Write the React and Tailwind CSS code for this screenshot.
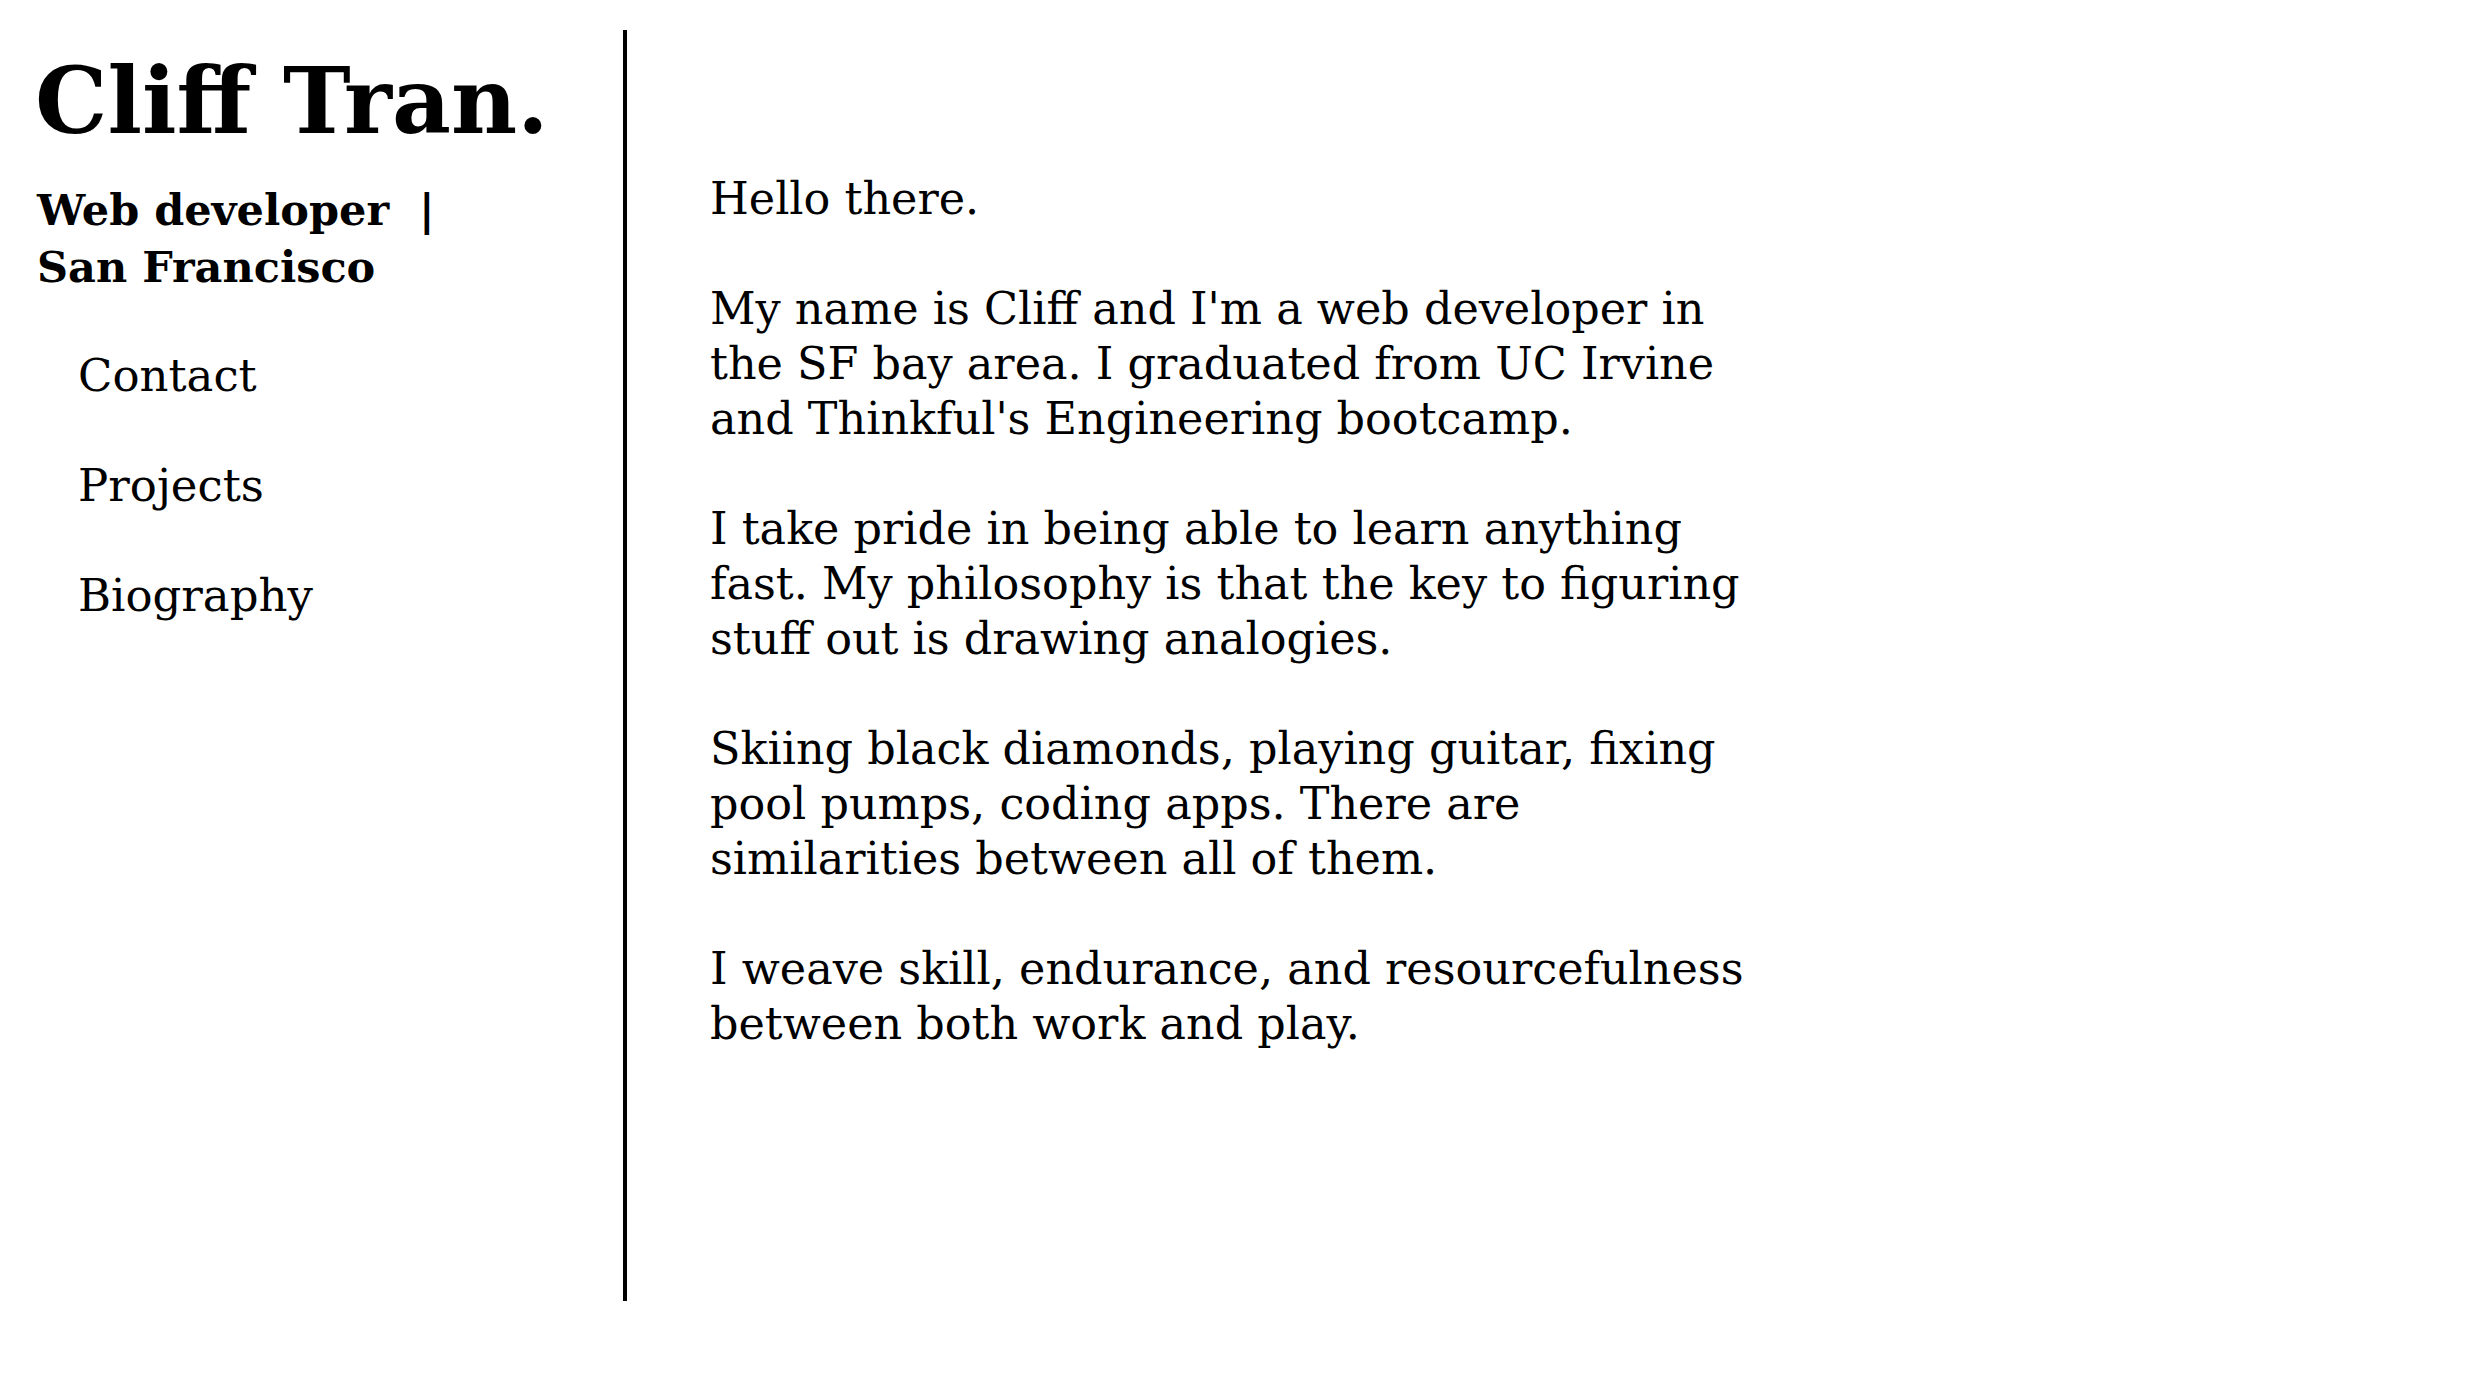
export default function App() {
  const paragraphs = [
    ["Hello there."],
    [
      "My name is Cliff and I'm a web developer in",
      "the SF bay area. I graduated from UC Irvine",
      "and Thinkful's Engineering bootcamp.",
    ],
    [
      "I take pride in being able to learn anything",
      "fast. My philosophy is that the key to figuring",
      "stuff out is drawing analogies.",
    ],
    [
      "Skiing black diamonds, playing guitar, fixing",
      "pool pumps, coding apps. There are",
      "similarities between all of them.",
    ],
    [
      "I weave skill, endurance, and resourcefulness",
      "between both work and play.",
    ],
  ];

  const links = ["Contact", "Projects", "Biography"];

  return (
    <div className="flex min-h-screen w-full bg-white text-black font-['DejaVu_Serif',serif]">
      {/* Sidebar */}
      <aside className="mt-[30px] h-[1271px] w-[627px] shrink-0 border-r-4 border-black pl-[35px] pt-[26px]">
        <h1 className="text-[91px] leading-none font-bold whitespace-nowrap">
          Cliff Tran.
        </h1>
        <h2 className="mt-[35px] pl-[2px] text-[43px] leading-[57px] font-bold whitespace-nowrap">
          Web developer&nbsp;&nbsp;|
          <br />
          San Francisco
        </h2>
        <nav className="mt-[52px] flex flex-col gap-[55px] pl-[43px]">
          {links.map((l) => (
            <a key={l} href="#" className="text-[45px] leading-[55px] whitespace-nowrap">
              {l}
            </a>
          ))}
        </nav>
      </aside>

      {/* Main */}
      <main className="pl-[83px] pt-[171px]">
        {paragraphs.map((p, i) => (
          <p key={i} className="mb-[55px] text-[44.5px] leading-[55px] whitespace-nowrap">
            {p.map((line, j) => (
              <span key={j} className="block">
                {line}
              </span>
            ))}
          </p>
        ))}
      </main>
    </div>
  );
}
